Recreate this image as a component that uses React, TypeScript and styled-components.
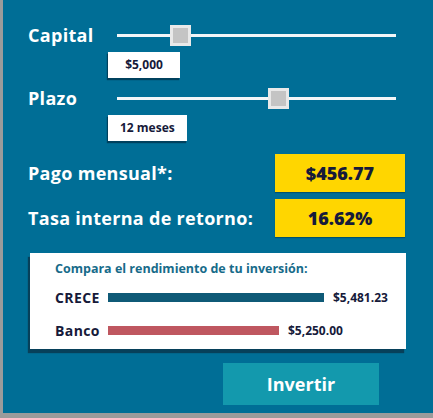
import React from 'react';
import styled, { createGlobalStyle } from 'styled-components';

const GlobalStyle = createGlobalStyle`
  html, body {
    margin: 0;
    padding: 0;
    background: #9b9b9b;
  }
  * {
    box-sizing: border-box;
  }
`;

const sliders = [
  { label: 'Capital', value: '$5,000', pos: 0.205 },
  { label: 'Plazo', value: '12 meses', pos: 0.585 },
];

const results = [
  { label: 'Pago mensual*:', value: '$456.77' },
  { label: 'Tasa interna de retorno:', value: '16.62%' },
];

const bars = [
  { label: 'CRECE', value: '$5,481.23', width: 216, color: '#0f5a77' },
  { label: 'Banco', value: '$5,250.00', width: 171, color: '#bf5760' },
];

function App(): JSX.Element {
  return (
    <>
      <GlobalStyle />
      <Panel>
        {sliders.map((s) => (
          <SliderBlock key={s.label}>
            <SliderRow>
              <Label>{s.label}</Label>
              <Track>
                <Thumb style={{ left: `calc((100% - 21px) * ${s.pos})` }} />
              </Track>
            </SliderRow>
            <ValueBox>{s.value}</ValueBox>
          </SliderBlock>
        ))}

        <Results>
          {results.map((r) => (
            <ResultRow key={r.label}>
              <Label>{r.label}</Label>
              <YellowBox>{r.value}</YellowBox>
            </ResultRow>
          ))}
        </Results>

        <Card>
          <CardTitle>Compara el rendimiento de tu inversión:</CardTitle>
          {bars.map((b) => (
            <BarRow key={b.label}>
              <BarLabel>{b.label}</BarLabel>
              <Bar $color={b.color} style={{ width: b.width }} />
              <BarValue>{b.value}</BarValue>
            </BarRow>
          ))}
        </Card>

        <ButtonRow>
          <Button>Invertir</Button>
        </ButtonRow>
      </Panel>
    </>
  );
}

const Panel = styled.div`
  margin-left: 3px;
  height: 413px;
  background: #006e96;
  padding: 25px 0 0 25px;
  display: flex;
  flex-direction: column;
  font-family: 'Open Sans', 'Liberation Sans', sans-serif;
`;

const SliderBlock = styled.div`
  display: flex;
  flex-direction: column;
  margin-bottom: 10px;
  &:nth-child(2) {
    margin-bottom: 13px;
  }
`;

const SliderRow = styled.div`
  display: flex;
  align-items: center;
  height: 21px;
`;

const Label = styled.div`
  color: #ffffff;
  font-size: 18px;
  font-weight: 700;
  letter-spacing: 0.3px;
  line-height: 21px;
  white-space: nowrap;
`;

const Track = styled.div`
  position: relative;
  margin-left: auto;
  margin-right: 37px;
  width: 279px;
  height: 3px;
  background: #f2f6f8;
`;

const Thumb = styled.div`
  position: absolute;
  top: -9px;
  width: 21px;
  height: 21px;
  background: #c4c4c4;
  border: 3px solid #e9e9e9;
`;

const ValueBox = styled.div`
  align-self: flex-start;
  margin: 6px 0 0 80px;
  min-width: 72px;
  height: 26px;
  padding: 0 12px;
  background: #ffffff;
  color: #161a3a;
  font-size: 12px;
  font-weight: 700;
  line-height: 26px;
  text-align: center;
  box-shadow: -1px 2px 1px rgba(0, 30, 50, 0.55);
`;

const Results = styled.div`
  display: flex;
  flex-direction: column;
  gap: 7px;
`;

const ResultRow = styled.div`
  display: flex;
  align-items: center;
  justify-content: space-between;
  padding-right: 28px;
`;

const YellowBox = styled.div`
  width: 130px;
  height: 38px;
  background: #ffd600;
  color: #161a3a;
  font-size: 18px;
  font-weight: 800;
  line-height: 38px;
  text-align: center;
  box-shadow: 0 1px 1px rgba(0, 0, 0, 0.25);
`;

const Card = styled.div`
  margin: 16px 0 0 2px;
  width: 376px;
  height: 96px;
  background: #ffffff;
  padding: 8px 0 0 25px;
  box-shadow: -2px 4px 1px rgba(10, 50, 70, 0.75);
`;

const CardTitle = styled.div`
  color: #176b8a;
  font-size: 12.5px;
  font-weight: 700;
  line-height: 16px;
  margin-bottom: 11px;
`;

const BarRow = styled.div`
  display: flex;
  align-items: center;
  height: 18px;
  margin-bottom: 15px;
`;

const BarLabel = styled.div`
  width: 53px;
  color: #161a3a;
  font-size: 14px;
  font-weight: 700;
  letter-spacing: 0.4px;
`;

const Bar = styled.div<{ $color: string }>`
  height: 9px;
  background: ${(p) => p.$color};
`;

const BarValue = styled.div`
  margin-left: 9px;
  color: #161a3a;
  font-size: 12px;
  font-weight: 700;
`;

const ButtonRow = styled.div`
  display: flex;
  justify-content: flex-end;
  padding-right: 54px;
  margin-top: 14px;
`;

const Button = styled.button`
  all: unset;
  width: 156px;
  height: 42px;
  background: #1399ad;
  color: #ffffff;
  font-family: 'Open Sans', 'Liberation Sans', sans-serif;
  font-size: 18px;
  font-weight: 700;
  text-align: center;
  line-height: 42px;
  cursor: pointer;
`;

export default App;
